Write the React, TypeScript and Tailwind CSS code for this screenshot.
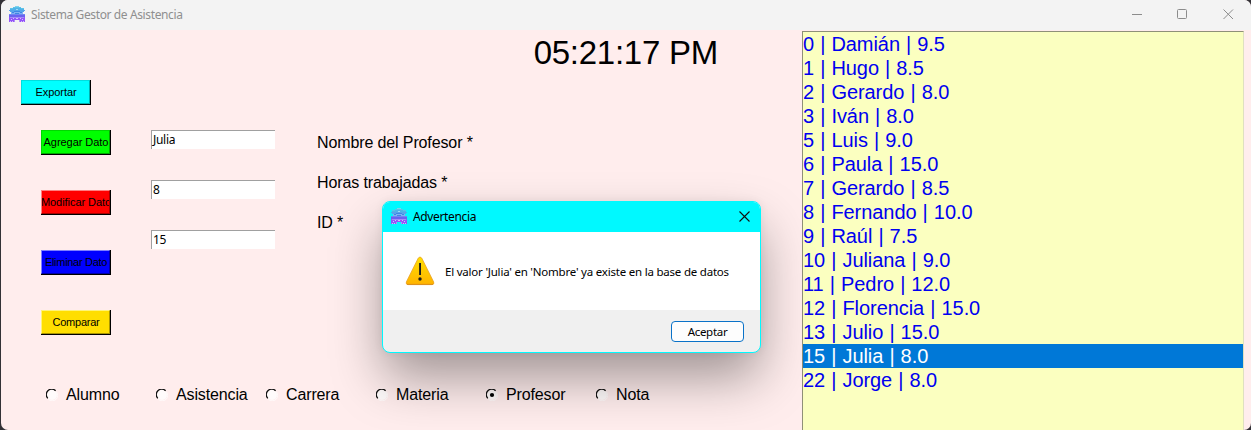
import type { ReactNode } from "react";

const rows = [
  "0 | Damián | 9.5",
  "1 | Hugo | 8.5",
  "2 | Gerardo | 8.0",
  "3 | Iván | 8.0",
  "5 | Luis | 9.0",
  "6 | Paula | 15.0",
  "7 | Gerardo | 8.5",
  "8 | Fernando | 10.0",
  "9 | Raúl | 7.5",
  "10 | Juliana | 9.0",
  "11 | Pedro | 12.0",
  "12 | Florencia | 15.0",
  "13 | Julio | 15.0",
  "15 | Julia | 8.0",
  "22 | Jorge | 8.0",
];
const selectedRow = 13;

const categories = ["Alumno", "Asistencia", "Carrera", "Materia", "Profesor", "Nota"];

function AppIcon() {
  return (
    <svg width="16" height="16" viewBox="0 0 16 16" shapeRendering="crispEdges" className="mb-[2px] shrink-0">
      <path d="M6 0h4v1H6z" fill="#7fd2ec" />
      <path d="M4 1h8v1H4zM1 2h3v1H1zM12 2h3v1h-3z" fill="#5cc3e8" />
      <path d="M4 2h8v1H4zM1 3h14v1H1z" fill="#4fb3e8" />
      <path d="M0 4h16v1H0zM1 5h14v1H1z" fill="#55a6ea" />
      <path d="M2 6h12v2H2z" fill="#7fb2f2" />
      <path d="M5 5h6v1H5zM3 6h2v1H3zM11 6h2v1h-2zM6 7h4v1H6z" fill="#3f86e4" />
      <path d="M0 8h16v1H0z" fill="#7187f2" />
      <path d="M0 9h16v2H0z" fill="#6a62f0" />
      <path d="M1 11h14v1H1z" fill="#a58cf7" />
      <path d="M0 11h1v5H0zM15 11h1v5h-1zM1 12h4v4H1zM11 12h4v4h-4zM5 12h6v2H5z" fill="#9455f9" />
      <path d="M2 13h1v1H2zM4 12h1v1H4zM13 13h1v1h-1zM11 12h1v1h-1zM7 12h2v1H7zM1 15h1v1H1zM3 15h1v1H3zM12 15h1v1h-1zM14 15h1v1h-1z" fill="#d3bdfb" />
      <path d="M5 14h1v2H5zM10 14h1v2h-1z" fill="#b48ffa" />
      <path d="M7 3h2v1H7z" fill="#9fdcf4" />
    </svg>
  );
}

function TkButton({ face, children }: { face: string; children: ReactNode }) {
  return (
    <div className="h-[25px] w-[70px] shrink-0 border-r border-b border-black">
      <div
        className={`flex h-full w-full items-center justify-center overflow-hidden border pl-px font-['Liberation_Sans',Arial,sans-serif] text-[11px] leading-none tracking-[-0.05px] whitespace-nowrap text-black ${face}`}
      >
        {children}
      </div>
    </div>
  );
}

function Entry({ value }: { value: string }) {
  return (
    <div className="flex h-[19px] w-[124px] items-center border-t border-l border-[#a0a0a0] bg-white pl-px font-['Noto_Sans',sans-serif] text-[12px] leading-none tracking-[-0.3px] text-black">
      {value}
    </div>
  );
}

function Radio({ checked }: { checked: boolean }) {
  return (
    <svg width="12" height="12" viewBox="0 0 12 12" className="shrink-0">
      <circle cx="6" cy="6" r="5" fill="#fff" fillOpacity="0.75" />
      <path d="M1.8 9.4A5.2 5.2 0 0 1 9.6 1.8" fill="none" stroke="#111" strokeWidth="1.3" />
      <path d="M10.2 2.6A5.2 5.2 0 0 1 2.4 10.2" fill="none" stroke="#fff" strokeOpacity="0.7" />
      {checked && <circle cx="6" cy="6" r="2.1" fill="#000" />}
    </svg>
  );
}

function WarningDialog() {
  return (
    <div className="absolute top-[201px] left-[381px] z-10 flex h-[152px] w-[379px] flex-col overflow-hidden rounded-[8px] border border-[#00f9ff] bg-[#f0f0f0] shadow-[0_26px_52px_-2px_rgba(0,0,0,0.38),0_0_10px_rgba(0,0,0,0.06)]">
      <div className="flex h-[30px] shrink-0 items-center bg-[#00f9ff] pr-[10px] pl-2">
        <AppIcon />
        <span className="ml-[6px] flex-1 font-['Noto_Sans',sans-serif] text-[12px] leading-none tracking-[-0.35px] text-black">
          Advertencia
        </span>
        <svg width="11" height="11" viewBox="0 0 11 11" className="mb-[2px]">
          <path d="M.5.5l10 10M10.5.5l-10 10" stroke="#111" strokeWidth="1.1" />
        </svg>
      </div>
      <div className="flex h-[78px] shrink-0 items-center bg-white pl-[22px]">
        <svg width="30" height="30" viewBox="0 0 30 30" className="shrink-0">
          <defs>
            <linearGradient id="warn" x1="0" y1="0" x2="0" y2="1">
              <stop offset="0" stopColor="#ffe000" />
              <stop offset="1" stopColor="#ffb300" />
            </linearGradient>
          </defs>
          <path
            d="M13.2 2.2Q15 -.4 16.8 2.2L28.7 26Q29.6 28.6 27 28.6H3Q.6 28.6 1.3 26Z"
            fill="url(#warn)"
            stroke="#e69a1a"
            strokeWidth="0.7"
          />
          <path d="M2 28.4h26" stroke="#d88a16" strokeWidth="0.9" />
          <path d="M14.1 7h1.9v12h-1.9z" fill="#1c1c1c" />
          <circle cx="15" cy="23" r="1.7" fill="#1c1c1c" />
        </svg>
        <span className="mt-[2px] ml-[10px] font-['Noto_Sans',sans-serif] text-[11.5px] leading-none tracking-[-0.21px] whitespace-nowrap text-black">
          El valor 'Julia' en 'Nombre' ya existe en la base de datos
        </span>
      </div>
      <div className="flex flex-1 justify-end pt-[11px] pr-4">
        <div className="flex h-[21px] w-[73px] items-center justify-center rounded-[4px] border border-[#0a72c8] bg-[#fdfdfd] font-['Noto_Sans',sans-serif] text-[11.5px] leading-none tracking-[-0.3px] text-black">
          Aceptar
        </div>
      </div>
    </div>
  );
}

export default function App() {
  return (
    <div className="h-[430px] w-[1251px] overflow-hidden bg-[#333136] pl-px">
      <div className="relative flex h-[430px] flex-col overflow-hidden rounded-[7px] bg-[#ffeded] font-['Liberation_Sans',Arial,sans-serif] text-black">
        <header className="flex h-[30px] shrink-0 items-center bg-[#f3f3f3] pr-[17px] pl-2">
          <AppIcon />
          <span className="ml-[6px] flex-1 font-['Noto_Sans',sans-serif] text-[12px] leading-none tracking-[-0.38px] text-[#8f8f8f]">
            Sistema Gestor de Asistencia
          </span>
          <svg width="102" height="12" viewBox="0 0 102 12" fill="none" stroke="#8c8c8c" className="mb-[2px]">
            <path d="M0 6.5h10" />
            <rect x="45.5" y="1.5" width="9" height="9" rx="1" />
            <path d="M91.5 1.5l9.5 9.5M101 1.5l-9.5 9.5" />
          </svg>
        </header>
        <div className="flex min-h-0 flex-1">
          <main className="flex w-[801px] shrink-0 flex-col">
            <div className="flex h-[50px] justify-end pt-1 pr-[84px]">
              <time className="text-[33px] leading-[38px] tracking-[-0.25px] whitespace-nowrap">05:21:17 PM</time>
            </div>
            <div className="pl-5">
              <TkButton face="bg-[#00ffff] border-t-[#00dede] border-l-[#00dede] border-r-[#00b0b0] border-b-[#00b0b0]">
                Exportar
              </TkButton>
            </div>
            <div className="mt-[25px] flex pl-10">
              <div className="flex flex-col gap-[35px]">
                <TkButton face="bg-[#00ff00] border-t-[#00d800] border-l-[#00d800] border-r-[#00a800] border-b-[#00a800]">
                  Agregar Dato
                </TkButton>
                <TkButton face="bg-[#ff0000] border-t-[#ff8080] border-l-[#ff8080] border-r-[#a80000] border-b-[#a80000]">
                  Modificar Dato
                </TkButton>
                <TkButton face="bg-[#0000ff] border-t-[#8080ff] border-l-[#8080ff] border-r-[#0000a8] border-b-[#0000a8]">
                  <span className="tracking-[-0.3px]">Eliminar Dato</span>
                </TkButton>
                <TkButton face="bg-[#ffde00] border-t-[#fff27a] border-l-[#fff27a] border-r-[#a89400] border-b-[#a89400]">
                  <span className="tracking-[-0.25px]">Comparar</span>
                </TkButton>
              </div>
              <div className="ml-10 flex flex-col gap-[31px]">
                <Entry value="Julia" />
                <Entry value="8" />
                <Entry value="15" />
              </div>
              <div className="ml-[42px] flex flex-col text-[16px] leading-[40px] tracking-[-0.12px] whitespace-nowrap">
                <span className="-mt-[7px]">Nombre del Profesor *</span>
                <span>Horas trabajadas *</span>
                <span>ID *</span>
              </div>
            </div>
            <div className="mt-[50px] flex pl-[45px]">
              {categories.map((name) => (
                <label key={name} className="flex w-[110px] items-center gap-2 text-[16px] leading-5 tracking-[-0.13px]">
                  <Radio checked={name === "Profesor"} />
                  {name}
                </label>
              ))}
            </div>
          </main>
          <aside className="mt-px w-[442px] border-t border-r border-l border-t-[#8f9078] border-r-[#dfe0c0] border-l-[#8f9078] bg-[#fbffc0] text-[20px] leading-6 tracking-[-0.06px] text-[#0000f0] [word-spacing:0.6px]">
            {rows.map((row, index) => (
              <div
                key={row}
                className={index === selectedRow ? "h-6 bg-[#0078d7] whitespace-nowrap text-white" : "h-6 whitespace-nowrap"}
              >
                {row}
              </div>
            ))}
          </aside>
        </div>
        <WarningDialog />
      </div>
    </div>
  );
}
